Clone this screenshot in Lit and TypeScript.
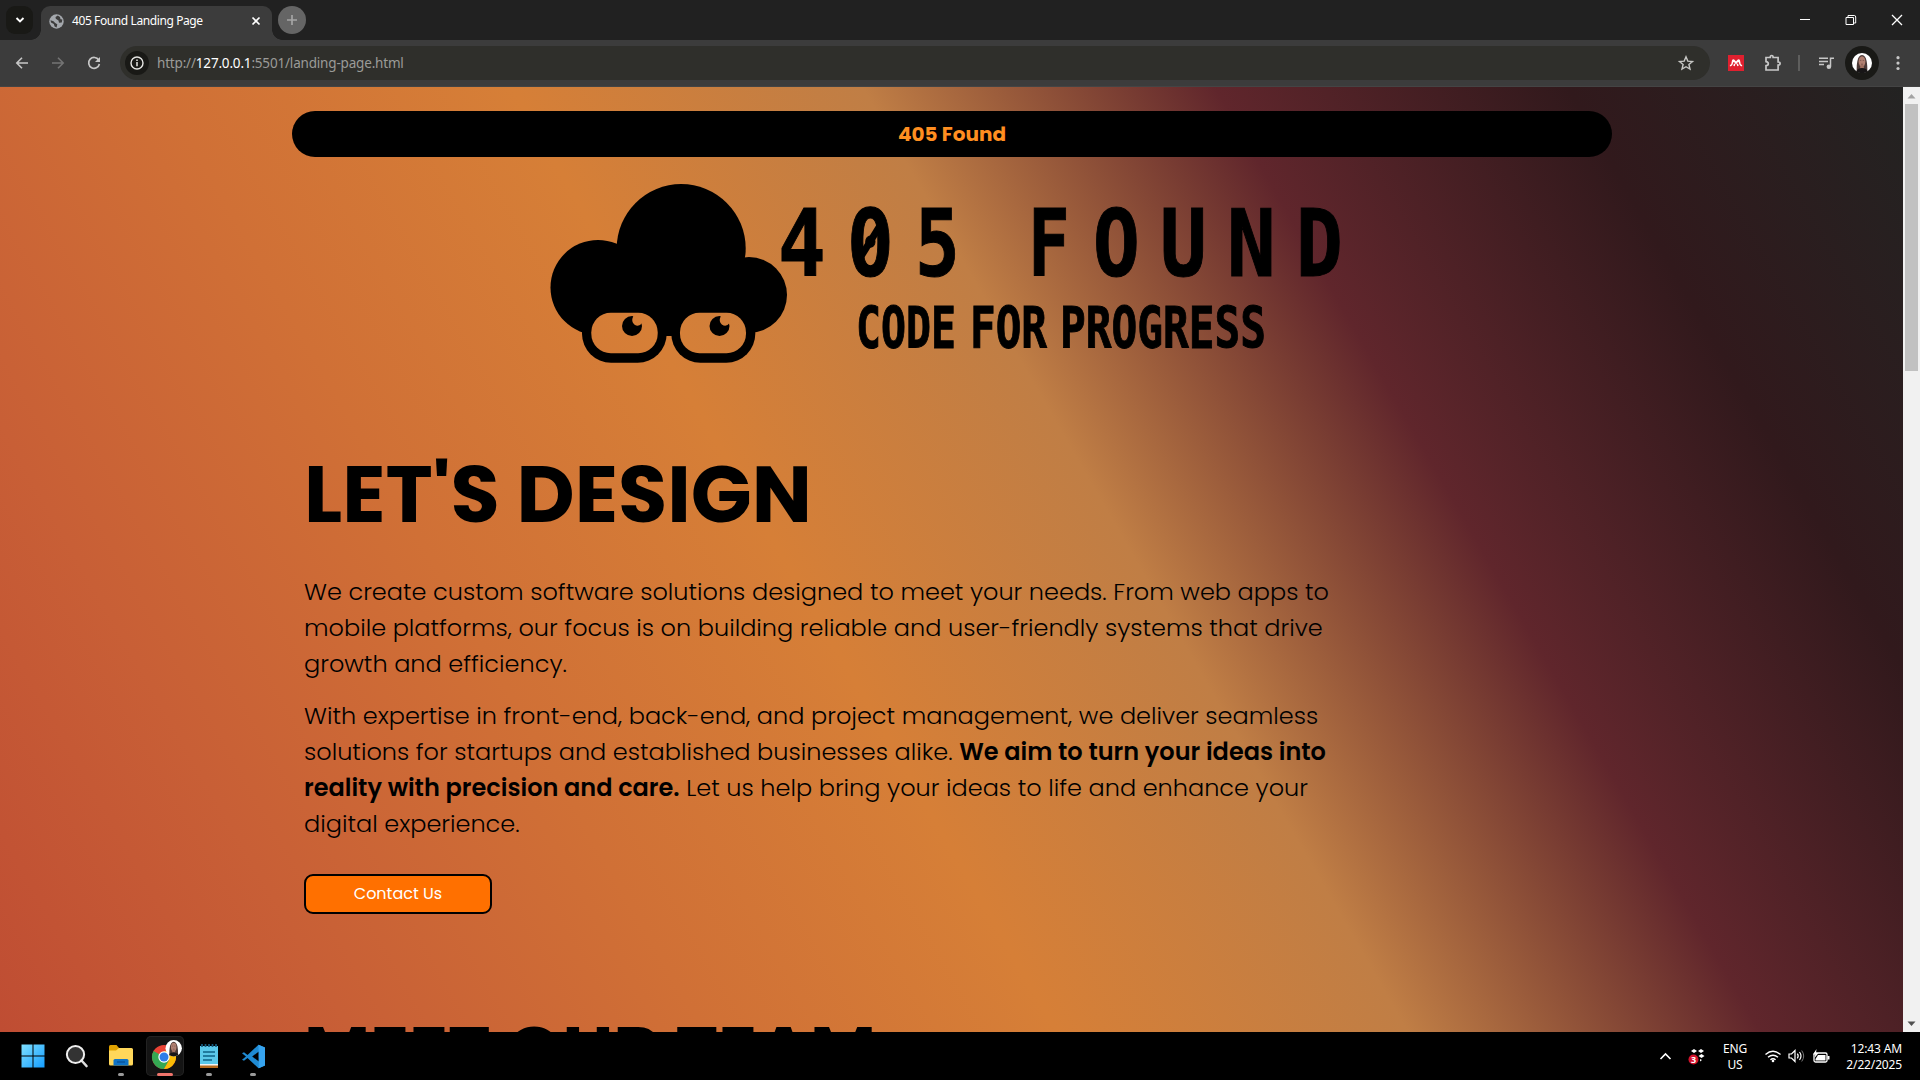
import { LitElement, html, css, svg } from "lit";
import { customElement } from "lit/decorators.js";

const face = svg`<circle cx="10" cy="10" r="10" fill="#fff"/>
  <path d="M4.700 18.600C4.500 12 5 2.200 10 2c5 .2 5.500 10 5.300 16.600Z" fill="#4a3835"/>
  <ellipse cx="10" cy="8.500" rx="3.400" ry="5.200" fill="#b07f70"/>
  <path d="M8.500 12h3l.5 3.500h-4Z" fill="#a07060"/>
  <path d="M7.900 7.400h1.400M10.700 7.400h1.400M9 11.200h2" stroke="#6d4a42" stroke-width=".7"/>
  <path d="M4.500 18.400c.5-2.500 3-3.400 5.500-3.400s5 .9 5.500 3.400A10 10 0 0 1 4.500 18.400Z" fill="#171516"/>`;

@customElement("browser-chrome")
class BrowserChrome extends LitElement {
  static styles = css`
    :host { display: block; font-family: "Noto Sans", "Open Sans", sans-serif; }
    svg { display: block; flex: none; }
    .tabs { height: 40px; background: #212121; display: flex; align-items: stretch; }
    .left { display: flex; width: 41px; box-sizing: border-box; padding: 6px 0 0 6px; }
    .drop { width: 27px; height: 28px; border-radius: 9px; background: #191916; display: grid; place-items: center; }
    .tab { position: relative; width: 231px; height: 34px; margin-top: 6px; border-radius: 9px 9px 0 0; background: #3c3c3c; display: flex; align-items: center; box-sizing: border-box; padding: 0 9px 4px 8px; }
    .tab::before, .tab::after { content: ""; position: absolute; bottom: 0; width: 10px; height: 10px; }
    .tab::before { left: -10px; background: radial-gradient(circle at 0 0, transparent 9.500px, #3c3c3c 10px); }
    .tab::after { right: -10px; background: radial-gradient(circle at 100% 0, transparent 9.500px, #3c3c3c 10px); }
    .title { font-size: 12px; color: #fff; margin-left: 8px; flex: 1; letter-spacing: -0.4px; white-space: nowrap; margin-top: -1px; }
    .plus { width: 28px; height: 28px; border-radius: 50%; background: #656565; margin: 6px 0 0 6px; display: grid; place-items: center; }
    .win { margin-left: auto; display: flex; align-items: center; gap: 34px; padding-right: 17px; }
    .bar { height: 47px; box-sizing: border-box; background: #3c3c3c; border-bottom: 1px solid #444; display: flex; align-items: center; padding: 0 13px 1px 14px; }
    .nav { display: flex; gap: 20px; width: 106px; }
    .box { width: 1590px; height: 34px; border-radius: 17px; background: #2f2f2b; display: flex; align-items: center; box-sizing: border-box; padding: 0 15px 0 5px; }
    .info { width: 24px; height: 24px; border-radius: 50%; background: #191916; display: grid; place-items: center; }
    .url { font-size: 13.500px; color: #9b9b98; margin-left: 8px; flex: 1; letter-spacing: -0.18px; }
    .url b { font-weight: 400; color: #fff; }
    .ext { flex: 1; display: flex; align-items: center; }
    .mend { margin-left: 18px; }
    .puz { margin-left: 19px; }
    .sep { width: 2px; height: 16px; background: #5e5e5d; margin-left: 16px; }
    .music { margin-left: 18px; }
    .me { width: 34px; height: 34px; border-radius: 50%; background: #191916; display: grid; place-items: center; margin-left: 11px; }
    .dots { margin-left: auto; }
  `;
  render() {
    return html`
      <div class="tabs">
        <div class="left"><div class="drop"><svg width="10" height="8" viewBox="0 0 10 8"><path d="M1.500 2 5 5.500 8.500 2" fill="none" stroke="#fff" stroke-width="1.900"/></svg></div></div>
        <div class="tab">
          <svg width="15" height="15" viewBox="0 0 15 15"><circle cx="7.500" cy="7.500" r="7.200" fill="#a4a8ad"/><path d="M1.500 6.300 4.500 7.200 6.200 9 8.300 10.200 7.600 13.400 5.600 12.600 4.800 10 2 8.600ZM8.800 1.600 6.500 3 6.800 4.800 9.500 6.500 10 8.800 12.800 8.600 13.300 5.500 11.500 5.200 11 3Z" fill="#3c3c3c"/></svg>
          <span class="title">405 Found Landing Page</span>
          <svg width="14" height="14" viewBox="0 0 14 14"><path d="m3.500 3.500 7 7m0-7-7 7" stroke="#fff" stroke-width="1.700"/></svg>
        </div>
        <div class="plus"><svg width="12" height="12" viewBox="0 0 12 12"><path d="M6 1v10M1 6h10" stroke="#a5a5a5" stroke-width="1.700"/></svg></div>
        <div class="win">
          <svg width="12" height="12" viewBox="0 0 12 12"><path d="M1 5.500h10" stroke="#fff"/></svg>
          <svg width="12" height="12" viewBox="0 0 12 12"><path d="M1 3.500h7.500v7H1Z M3 3.300V1.500h6.300q1.400 0 1.400 1.500v6H9" fill="none" stroke="#fff"/></svg>
          <svg width="12" height="12" viewBox="0 0 12 12"><path d="m1 1 10 10M11 1 1 11" stroke="#fff" stroke-width="1.300"/></svg>
        </div>
      </div>
      <div class="bar">
        <div class="nav">
          <svg width="16" height="16" viewBox="0 0 16 16"><path d="M14 8H3M8 2.800 2.800 8 8 13.200" fill="none" stroke="#c7c7c7" stroke-width="1.600"/></svg>
          <svg width="16" height="16" viewBox="0 0 16 16"><path d="M2 8h11M8 2.800 13.200 8 8 13.200" fill="none" stroke="#747474" stroke-width="1.600"/></svg>
          <svg width="16" height="16" viewBox="0 0 16 16"><path d="M12.700 5A5.400 5.400 0 1 0 13.400 9" fill="none" stroke="#c7c7c7" stroke-width="1.700"/><path d="M14 2v5H9Z" fill="#c7c7c7"/></svg>
        </div>
        <div class="box">
          <div class="info"><svg width="14" height="14" viewBox="0 0 14 14"><circle cx="7" cy="7" r="6" fill="none" stroke="#e6e6e3" stroke-width="1.400"/><path d="M7 6v4.200M7 3.600v1.500" stroke="#e6e6e3" stroke-width="1.500"/></svg></div>
          <span class="url">http://<b>127.0.0.1</b>:5501/landing-page.html</span>
          <svg width="18" height="18" viewBox="0 0 18 18"><path d="m9 2.800 1.800 4.300 4.700.4-3.600 3 1.100 4.600L9 12.700l-4 2.400 1.100-4.600-3.600-3 4.700-.4Z" fill="none" stroke="#c7c7c4" stroke-width="1.400"/></svg>
        </div>
        <div class="ext">
          <svg class="mend" width="16" height="16" viewBox="0 0 16 16"><path fill="#e0202f" d="M0 0h16v16H0z"/><g fill="none" stroke="#fff" stroke-width="1.500"><path d="M1.900 10.400h1q1.300-.4 1.600-4.200M14.100 10.400h-1q-1.300-.4-1.600-4.200M6.300 5.500 7.400 7.300M9.700 5.500 8.600 7.300M6 11 6.700 8.700M10 11 9.300 8.700"/></g><g fill="#fff"><circle cx="5.400" cy="5.700" r="1.500"/><circle cx="10.600" cy="5.700" r="1.500"/><circle cx="8" cy="7.600" r="1.300"/></g></svg>
          <svg class="puz" width="19" height="18" viewBox="0 0 19 18"><path d="M3 3.500h4.300q-.1-2 1.400-2t1.400 2h5v4.500q2 0 2 1.500t-2 1.500v5H3v-4.300q2.300-.2 2.300-2T3 7.600Z" fill="none" stroke="#c7c7c7" stroke-width="1.700"/></svg>
          <div class="sep"></div>
          <svg class="music" width="16" height="14" viewBox="0 0 16 14"><path d="M1 2.200h9M1 5.400h9M1 8.600h5M12.500 10.500V2.200H16" fill="none" stroke="#c7c7c7" stroke-width="1.500"/><circle cx="10.900" cy="10.800" r="2.300" fill="#c7c7c7"/></svg>
          <div class="me"><svg width="20" height="20" viewBox="0 0 20 20">${face}</svg></div>
          <svg class="dots" width="18" height="18" viewBox="0 0 18 18"><g fill="#c7c7c7"><circle cx="9" cy="3.700" r="1.600"/><circle cx="9" cy="9.100" r="1.600"/><circle cx="9" cy="14.500" r="1.600"/></g></svg>
        </div>
      </div>`;
  }
}

type Glyph = [text: string, x: number, width: number];

@customElement("brand-logo")
class BrandLogo extends LitElement {
  static styles = css`
    :host { display: block; }
    svg { display: block; }
    text { font-family: "DejaVu Sans Mono", monospace; font-weight: 700; fill: #000; stroke: #000; }
  `;
  render() {
    const big: Glyph[] = [["4", 782, 40], ["0", 851, 39], ["5", 919, 37], ["F", 1032, 34], ["O", 1097, 39], ["U", 1164, 39], ["N", 1231, 41], ["D", 1300, 39]];
    const small: Glyph[] = [["CODE", 857, 98], ["FOR", 971, 75], ["PROGRESS", 1061, 204]];
    return html`<svg width="800" height="190" viewBox="546 181 800 190">
      <mask id="m" maskUnits="userSpaceOnUse" x="540" y="170" width="260" height="200">
        <rect x="540" y="170" width="260" height="200" fill="#fff"/>
        <rect x="591.300" y="312.700" width="66.400" height="40.600" rx="19.500"/>
        <rect x="680" y="312.700" width="66" height="40.600" rx="19.500"/>
        <circle cx="632" cy="326" r="10" fill="#fff"/><circle cx="719.500" cy="326" r="10" fill="#fff"/>
        <path d="M633.300 316q-2.500 5.500 1 8.500 4.500 3 7.800-1.500l1-8Z M720.800 316q-2.500 5.500 1 8.500 4.500 3 7.800-1.500l1-8Z"/>
      </mask>
      <g mask="url(#m)">
        <circle cx="681.200" cy="248.500" r="64.500"/><circle cx="598" cy="287.500" r="47.500"/><circle cx="749" cy="295" r="38"/>
        <path d="M618 250h122v12l10 20v48H598Z"/>
        <rect x="582" y="303" width="84.700" height="59.700" rx="29"/><rect x="671.300" y="303" width="84" height="59.700" rx="29"/>
        <path d="M660 310h20v26h-20Z"/>
      </g>
      <g font-size="92.500" stroke-width="1">
        ${big.map(([c, x, w]) => svg`<text transform="translate(${x - 4} 275.500) scale(${(w + 8) / 56} 1)">${c}</text>`)}
      </g>
      <path d="M860 258 881 224" stroke="#000" stroke-width="7"/>
      <g font-size="57.500" stroke-width="1">
        ${small.map(([c, x, w]) => svg`<text transform="translate(${x - 1} 348) scale(${(w + 2) / (c.length * 34.62)} 1)">${c}</text>`)}
      </g>
    </svg>`;
  }
}

@customElement("landing-page")
class LandingPage extends LitElement {
  static styles = css`
    :host { display: flex; height: 945px; overflow: hidden; font-family: Poppins, Inter, sans-serif; color: #000; }
    .page { width: 1903px; height: 945px; overflow: hidden; box-sizing: border-box; padding-top: 24px; display: flex; flex-direction: column; align-items: center;
      background: linear-gradient(60deg, #bf4d33 0%, #c85f36 14.300%, #d07036 28.600%, #d67f37 42.900%, #c07e45 57.100%, #60262c 71.400%, #31191c 85.700%, #222322 100%) 0 0 / 1920px 945px no-repeat; }
    .page > * { flex: none; }
    .pill { width: 1320px; height: 46px; border-radius: 23px; background: #000; color: #ff8e20; font-weight: 700; font-size: 20px; display: grid; place-items: center; box-sizing: border-box; padding-left: 1px; }
    .logo { margin-top: 24px; width: 811px; }
    .main { width: 1295px; }
    h1, h2 { margin: 0; font-weight: 700; line-height: 96px; white-space: nowrap; }
    h1 { margin-top: 75px; font-size: 80px; }
    h2 { margin-top: 91px; font-size: 72px; }
    .copy { margin-top: 32px; font-size: 24px; line-height: 36px; font-weight: 300; }
    .copy p { margin: 0 0 16px; }
    .row { display: block; white-space: nowrap; }
    b { font-weight: 600; }
    button { display: block; margin: 32px 0 0; width: 188px; height: 40px; border: 2px solid #000; border-radius: 9px; background: #ff7000; color: #fff; font: 400 16px Poppins, Inter, sans-serif; padding: 0 0 1px; }
    .scroll { width: 17px; background: #f1f1f1; display: flex; flex-direction: column; align-items: center; }
    .up, .down { height: 17px; display: grid; place-items: center; }
    .thumb { width: 13px; height: 267px; background: #c1c1c1; }
    .down { margin-top: auto; }
  `;
  render() {
    return html`<div class="page">
        <div class="pill">405 Found</div>
        <brand-logo class="logo"></brand-logo>
        <div class="main">
          <h1>LET'S DESIGN</h1>
          <div class="copy">
            <p>
              <span class="row">We create custom software solutions designed to meet your needs. From web apps to</span>
              <span class="row">mobile platforms, our focus is on building reliable and user-friendly systems that drive</span>
              <span class="row">growth and efficiency.</span>
            </p>
            <p>
              <span class="row">With expertise in front-end, back-end, and project management, we deliver seamless</span>
              <span class="row">solutions for startups and established businesses alike. <b>We aim to turn your ideas into</b></span>
              <span class="row"><b>reality with precision and care.</b> Let us help bring your ideas to life and enhance your</span>
              <span class="row">digital experience.</span>
            </p>
          </div>
          <button>Contact Us</button>
          <h2>MEET OUR TEAM</h2>
        </div>
      </div>
      <div class="scroll">
        <div class="up"><svg width="9" height="6" viewBox="0 0 9 6"><path d="M.5 5.500 4.500 1l4 4.500Z" fill="#a3a3a3"/></svg></div>
        <div class="thumb"></div>
        <div class="down"><svg width="9" height="6" viewBox="0 0 9 6"><path d="M.5.5 4.500 5l4-4.500Z" fill="#505050"/></svg></div>
      </div>`;
  }
}

@customElement("task-bar")
class TaskBar extends LitElement {
  static styles = css`
    :host { display: flex; height: 48px; background: #000; color: #fff; font: 12px/16px "Noto Sans", "Open Sans", sans-serif; justify-content: space-between; }
    svg { display: block; flex: none; }
    .apps { display: flex; padding-left: 11px; }
    .app { width: 44px; height: 48px; display: grid; grid-template-rows: 39px 3px; justify-items: center; align-items: center; box-sizing: border-box; padding-top: 4px; align-content: start; }
    .app svg { margin-top: 1px; }
    .on { background: #141414; border-radius: 5px; box-shadow: inset 0 0 0 1px #222; width: 38px; height: 40px; margin: 4px 3px; padding-top: 0; }
    .dot { width: 6px; height: 3px; border-radius: 2px; background: #9a9a9a; margin-top: -4px; }
    .red { width: 16px; background: #f0746c; }
    .tray { display: flex; align-items: center; }
    .drop { margin-left: 16px; }
    .lang { text-align: center; width: 24px; white-space: nowrap; margin-left: 15px; letter-spacing: -0.2px; padding-top: 1px; }
    .wifi { margin-left: 17px; }
    .vol { margin-left: 6px; }
    .bat { margin-left: 7px; }
    .clock { text-align: right; width: 68px; margin: 0 18px 0 4px; white-space: nowrap; letter-spacing: -0.15px; padding-top: 1px; }
  `;
  render() {
    return html`<div class="apps">
        <div class="app"><svg width="24" height="24" viewBox="0 0 24 24"><defs><linearGradient id="w" x2="1" y2="1"><stop stop-color="#7fe0ff"/><stop offset="1" stop-color="#149dff"/></linearGradient></defs><path fill="url(#w)" d="M.5.5h11v11h-11zM12.500.5h11v11h-11zM.5 12.500h11v11h-11zM12.500 12.500h11v11h-11z"/></svg></div>
        <div class="app"><svg width="24" height="24" viewBox="0 0 24 24"><circle cx="10.500" cy="10.500" r="8.600" fill="#333"/><path d="m16.500 16.500 5 5.500" stroke="#ddd" stroke-width="2.600" stroke-linecap="round"/><circle cx="10.500" cy="10.500" r="8.600" fill="none" stroke="#eee" stroke-width="2"/></svg></div>
        <div class="app"><svg width="26" height="24" viewBox="0 0 26 24"><path d="M1 2.500q0-1.500 1.500-1.500h6l2.500 3v3H1Z" fill="#e0a200"/><path d="M1 6.500h7l3-2.500h12.500Q25 4 25 5.500V20q0 1.500-1.500 1.500h-21Q1 21.500 1 20Z" fill="#ffd75a"/><path d="M5.500 21.500v-5q0-1.500 1.500-1.500h12q1.500 0 1.500 1.500v5Z" fill="#0f73c6"/><path d="M9 18h8" stroke="#0a559c" stroke-width="1.500"/></svg><i class="dot"></i></div>
        <div class="app on"><svg width="34" height="34" viewBox="0 0 34 34"><g transform="translate(-1 -.5)"><circle cx="17" cy="18.500" r="12" fill="#ea4335"/><path d="M17 18.500 6.600 12.500A12 12 0 0 0 17 30.500l5.200-9Z" fill="#34a853"/><path d="M17 30.500A12 12 0 0 0 27.400 12.500H17l5.200 9Z" fill="#fbbc05"/><circle cx="17" cy="18.500" r="5.700" fill="#fff"/><circle cx="17" cy="18.500" r="4.500" fill="#2f7de9"/></g><g transform="translate(17.500 1) scale(.82)">${face}</g></svg><i class="dot red"></i></div>
        <div class="app"><svg width="20" height="26" viewBox="0 0 20 26"><path d="M1 3h18v19H1Z" fill="#5bc8ea"/><path d="M1 22h18v3H1Z" fill="#b56a1e"/><path d="M1 21h18v1.500H1Z" fill="#f2f2f2"/><path d="M3 1v3M6.500 1v3M10 1v3M13.500 1v3M17 1v3" stroke="#155a7c" stroke-width="1.700"/><path d="M4 9h12M4 13h12M4 17h9" stroke="#0f6286" stroke-width="1.700"/></svg><i class="dot"></i></div>
        <div class="app"><svg width="25" height="25" viewBox="0 0 25 25"><path d="M17.500.8 24 3.500v18l-6.500 2.700L6.500 14 3 16.800 1 15.700 5 12.500 1 9.300 3 8.200 6.500 11Z" fill="#1f8ad2"/><path d="M17.800 7.500v10L11.200 12.500Z" fill="#000"/><path d="M17.500.8 24 3.500v18l-6.200 2.700Z" fill="#36a3ee"/></svg><i class="dot"></i></div>
      </div>
      <div class="tray">
        <svg width="13" height="9" viewBox="0 0 13 9"><path d="M1.500 7 6.500 2l5 5" fill="none" stroke="#fff" stroke-width="1.600"/></svg>
        <svg class="drop" width="20" height="18" viewBox="0 0 20 18"><g fill="#fff"><path d="m6 2 3 2-3 2-3-2ZM13 2l3 2-3 2-3-2ZM13.500 7l3 2-3 2-3-2ZM12 12l2 1-2 1.500Z"/></g><circle cx="5.500" cy="12.500" r="5" fill="#d3122b"/><text x="5.500" y="16" font-size="9" font-weight="700" text-anchor="middle" fill="#fff">3</text></svg>
        <div class="lang">ENG<br>US</div>
        <svg class="wifi" width="18" height="14" viewBox="0 0 18 14"><path d="M1.500 5.500q7.500-6.500 15 0M4 8.300q5-4.300 10 0M6.400 10.800q2.600-2 5.200 0" fill="none" stroke="#fff" stroke-width="1.400"/><circle cx="9" cy="12" r="1.300" fill="#fff"/></svg>
        <svg class="vol" width="17" height="14" viewBox="0 0 17 14"><path d="M1 5h2.500L7 1.500v11L3.500 9H1Z" fill="none" stroke="#fff" stroke-width="1.200"/><path d="M9.300 4.700q1.800 2.300 0 4.600M11.500 3q3 4 0 8" fill="none" stroke="#fff" stroke-width="1.200"/><path d="M13.700 1.500q4 5.500 0 11" fill="none" stroke="#777"/></svg>
        <svg class="bat" width="18" height="15" viewBox="0 0 18 15"><rect x="2" y="4" width="13" height="9" rx="1.500" fill="none" stroke="#fff" stroke-width="1.300"/><path d="M6 6h7.500v5.500H3.500V10ZM15.500 7h2v3.500h-2ZM4.500 0 1 5.500h2.300L2.500 9 6.500 4H4Z" fill="#fff"/></svg>
        <div class="clock">12:43 AM<br>2/22/2025</div>
      </div>`;
  }
}

@customElement("app-root")
class AppRoot extends LitElement {
  static styles = css`:host { display: block; width: 1920px; height: 1080px; overflow: hidden; background: #000; }`;
  render() {
    return html`<browser-chrome></browser-chrome><landing-page></landing-page><task-bar></task-bar>`;
  }
}
